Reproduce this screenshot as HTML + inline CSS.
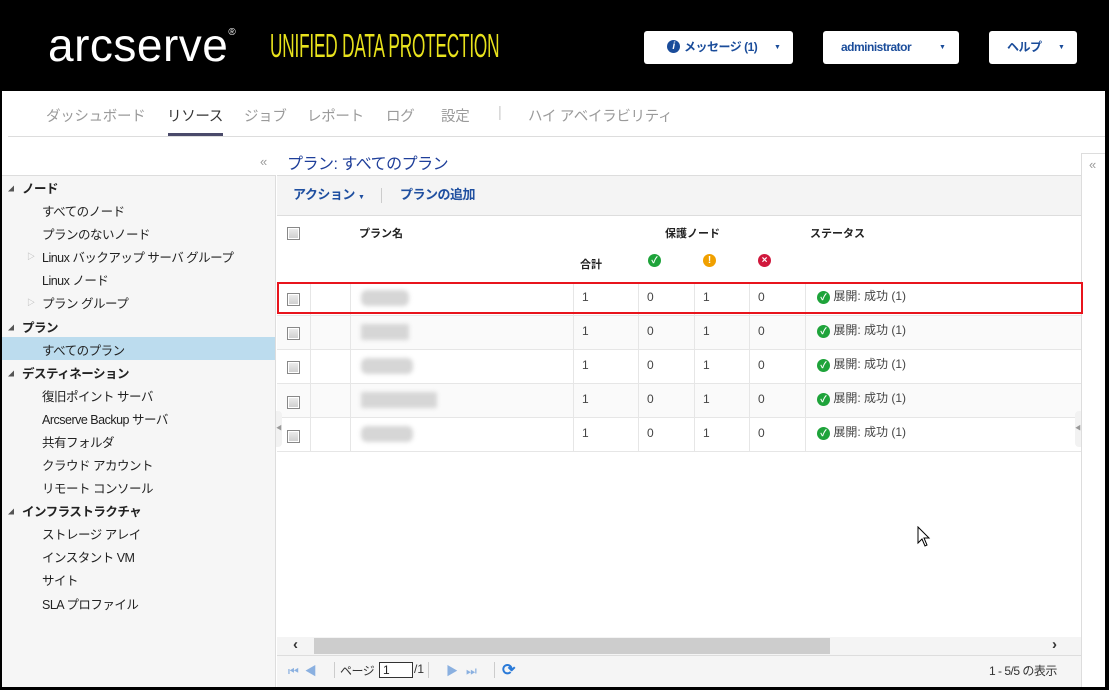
<!DOCTYPE html>
<html><head><meta charset="utf-8"><style>
*{box-sizing:border-box;margin:0;padding:0}
body{width:1109px;height:690px;background:#000;position:relative;overflow:hidden;font-family:"Liberation Sans","Noto Sans CJK JP",sans-serif;font-size:12px;color:#222}
.a{position:absolute}
.btn{position:absolute;top:31px;height:33px;background:#fff;border-radius:3px;color:#1a4c9a;font-size:12px;font-weight:bold;line-height:33px;letter-spacing:-0.5px}
.btn .c{position:absolute;font-size:7px;color:#1a4c9a}
.nav span{position:absolute;top:105px;font-size:14.5px;color:#9a9a9a;letter-spacing:-0.3px}
.side div{position:absolute;font-size:12.5px;color:#222;letter-spacing:-0.5px;white-space:nowrap}
.side .h{font-weight:bold;left:22px}
.side .i{left:42px}
.side .tri{font-size:6px;color:#555}
.cb{position:absolute;width:13px;height:13px;border:1px solid #888;background:linear-gradient(#eee,#ccc);box-shadow:inset 0 0 0 1px #fff}
.row{position:absolute;left:277px;width:804px;height:34px;border-bottom:1px solid #e6e6e6}
.row div{position:absolute;top:0;height:34px;border-left:1px solid #e6e6e6;line-height:30px;padding-left:8px;color:#444;font-size:12px}
.ok{display:inline-block;width:13px;height:13px;border-radius:50%;background:#1ea33a;color:#fff;font-size:9px;line-height:13px;text-align:center;font-weight:bold;vertical-align:0}
.blur{position:absolute;top:8px;height:16px;background:#d6d6d6;border-radius:6px;filter:blur(2px)}
</style></head><body>
<!-- header -->
<div class="a" style="left:48px;top:18px;color:#fff;font-size:46px;letter-spacing:0.5px;font-weight:normal">arcserve<sup style="font-size:10px;vertical-align:26px">®</sup></div>
<div class="a" style="left:270px;top:27px;color:#e8e21c;font-size:33px;font-weight:normal;transform:scaleX(0.52);transform-origin:0 0;white-space:nowrap;letter-spacing:-0.3px">UNIFIED DATA PROTECTION</div>
<div class="btn" style="left:644px;width:149px"><span style="position:absolute;left:23px;top:9px;width:13px;height:13px;border-radius:50%;background:#1a4c9a;color:#fff;font-size:10px;line-height:13px;text-align:center;font-style:italic">i</span><span style="position:absolute;left:40px">メッセージ (1)</span><span class="c" style="left:130px">▼</span></div>
<div class="btn" style="left:823px;width:136px"><span style="position:absolute;left:18px">administrator</span><span class="c" style="left:116px">▼</span></div>
<div class="btn" style="left:989px;width:88px"><span style="position:absolute;left:18px">ヘルプ</span><span class="c" style="left:69px">▼</span></div>
<!-- white body -->
<div class="a" style="left:2px;top:91px;width:1103px;height:596px;background:#fff"></div>
<div class="nav">
<span style="left:46px">ダッシュボード</span>
<span style="left:167px;color:#333">リソース</span>
<span style="left:244px">ジョブ</span>
<span style="left:307px">レポート</span>
<span style="left:386px">ログ</span>
<span style="left:441px">設定</span>
<span style="left:498px;color:#ccc">|</span>
<span style="left:528px">ハイ アベイラビリティ</span>
</div>
<div class="a" style="left:168px;top:133px;width:55px;height:3px;background:#4a4a6a"></div>
<div class="a" style="left:8px;top:136px;width:1097px;height:1px;background:#ddd"></div>
<div class="a" style="left:260px;top:154px;color:#999;font-size:13px">«</div>
<div class="a" style="left:287px;top:150px;color:#1f3f9a;font-size:16px;letter-spacing:-0.5px">プラン: すべてのプラン</div>
<!-- sidebar -->
<div class="a" style="left:2px;top:175px;width:274px;height:512px;background:#f6f6f6;border-top:1px solid #ddd;border-right:1px solid #ddd"></div>
<div class="a" style="left:2px;top:337px;width:273px;height:23px;background:#bcdcee"></div>
<div class="side">
<div class="tri" style="left:8px;top:184px">◢</div><div class="h" style="top:178px">ノード</div>
<div class="i" style="top:201px">すべてのノード</div>
<div class="i" style="top:224px">プランのないノード</div>
<div class="tri" style="left:27px;top:251px;color:#aaa;font-size:8px">▷</div><div class="i" style="top:247px">Linux バックアップ サーバ グループ</div>
<div class="i" style="top:270px">Linux ノード</div>
<div class="tri" style="left:27px;top:297px;color:#aaa;font-size:8px">▷</div><div class="i" style="top:293px">プラン グループ</div>
<div class="tri" style="left:8px;top:323px">◢</div><div class="h" style="top:317px">プラン</div>
<div class="i" style="top:340px">すべてのプラン</div>
<div class="tri" style="left:8px;top:369px">◢</div><div class="h" style="top:363px">デスティネーション</div>
<div class="i" style="top:386px">復旧ポイント サーバ</div>
<div class="i" style="top:409px">Arcserve Backup サーバ</div>
<div class="i" style="top:432px">共有フォルダ</div>
<div class="i" style="top:455px">クラウド アカウント</div>
<div class="i" style="top:478px">リモート コンソール</div>
<div class="tri" style="left:8px;top:507px">◢</div><div class="h" style="top:501px">インフラストラクチャ</div>
<div class="i" style="top:524px">ストレージ アレイ</div>
<div class="i" style="top:547px">インスタント VM</div>
<div class="i" style="top:570px">サイト</div>
<div class="i" style="top:594px">SLA プロファイル</div>
</div>
<!-- right collapsed panel -->
<div class="a" style="left:1081px;top:153px;width:24px;height:534px;background:#fff;border-left:1px solid #ddd;border-top:1px solid #ddd"></div>
<div class="a" style="left:1089px;top:157px;color:#999;font-size:13px">«</div>
<!-- main -->
<div class="a" style="left:277px;top:175px;width:804px;height:41px;background:#f4f4f4;border-top:1px solid #ddd;border-bottom:1px solid #ddd"></div>
<div class="a" style="left:293px;top:184px;color:#1f4fa0;font-weight:bold;font-size:13px;letter-spacing:-0.5px">アクション <span style="font-size:7px">▼</span></div>
<div class="a" style="left:381px;top:188px;width:1px;height:15px;background:#ccc"></div>
<div class="a" style="left:400px;top:184px;color:#1f4fa0;font-weight:bold;font-size:13px;letter-spacing:-0.5px">プランの追加</div>
<div class="cb" style="left:287px;top:227px"></div>
<div class="a" style="left:359px;top:225px;font-weight:bold;font-size:11px">プラン名</div>
<div class="a" style="left:665px;top:225px;font-weight:bold;font-size:11px">保護ノード</div>
<div class="a" style="left:810px;top:225px;font-weight:bold;font-size:11px">ステータス</div>
<div class="a" style="left:580px;top:256px;font-weight:bold;font-size:11px">合計</div>
<div class="a ok" style="left:648px;top:254px">✓</div>
<div class="a" style="left:703px;top:254px;width:13px;height:13px;border-radius:50%;background:#f0a000;color:#fff;font-size:10px;font-weight:bold;text-align:center;line-height:13px">!</div>
<div class="a" style="left:758px;top:254px;width:13px;height:13px;border-radius:50%;background:#d0183c;color:#fff;font-size:10px;font-weight:bold;text-align:center;line-height:13px">×</div>
<div class="a" style="left:277px;top:282px;width:804px;height:1px;background:#e6e6e6"></div>
<div class="row" style="top:282px;background:#fff"><div style="left:0;width:33px;border:0"></div><div style="left:33px;width:40px"></div><div style="left:73px;width:223px"><span class="blur" style="left:10px;width:48px"></span></div><div style="left:296px;width:65px">1</div><div style="left:361px;width:56px">0</div><div style="left:417px;width:55px">1</div><div style="left:472px;width:56px">0</div><div style="left:528px;width:276px;padding-left:11px;line-height:28px"><span class="ok">✓</span> 展開: 成功 (1)</div></div>
<div class="row" style="top:316px;background:#fafafa"><div style="left:0;width:33px;border:0"></div><div style="left:33px;width:40px"></div><div style="left:73px;width:223px"><span class="blur" style="left:10px;width:48px;border-radius:2px"></span></div><div style="left:296px;width:65px">1</div><div style="left:361px;width:56px">0</div><div style="left:417px;width:55px">1</div><div style="left:472px;width:56px">0</div><div style="left:528px;width:276px;padding-left:11px;line-height:28px"><span class="ok">✓</span> 展開: 成功 (1)</div></div>
<div class="row" style="top:350px;background:#fff"><div style="left:0;width:33px;border:0"></div><div style="left:33px;width:40px"></div><div style="left:73px;width:223px"><span class="blur" style="left:10px;width:52px"></span></div><div style="left:296px;width:65px">1</div><div style="left:361px;width:56px">0</div><div style="left:417px;width:55px">1</div><div style="left:472px;width:56px">0</div><div style="left:528px;width:276px;padding-left:11px;line-height:28px"><span class="ok">✓</span> 展開: 成功 (1)</div></div>
<div class="row" style="top:384px;background:#fafafa"><div style="left:0;width:33px;border:0"></div><div style="left:33px;width:40px"></div><div style="left:73px;width:223px"><span class="blur" style="left:10px;width:76px;border-radius:2px"></span></div><div style="left:296px;width:65px">1</div><div style="left:361px;width:56px">0</div><div style="left:417px;width:55px">1</div><div style="left:472px;width:56px">0</div><div style="left:528px;width:276px;padding-left:11px;line-height:28px"><span class="ok">✓</span> 展開: 成功 (1)</div></div>
<div class="row" style="top:418px;background:#fff"><div style="left:0;width:33px;border:0"></div><div style="left:33px;width:40px"></div><div style="left:73px;width:223px"><span class="blur" style="left:10px;width:52px"></span></div><div style="left:296px;width:65px">1</div><div style="left:361px;width:56px">0</div><div style="left:417px;width:55px">1</div><div style="left:472px;width:56px">0</div><div style="left:528px;width:276px;padding-left:11px;line-height:28px"><span class="ok">✓</span> 展開: 成功 (1)</div></div>
<div class="cb" style="left:287px;top:293px"></div>
<div class="cb" style="left:287px;top:327px"></div>
<div class="cb" style="left:287px;top:361px"></div>
<div class="cb" style="left:287px;top:396px"></div>
<div class="cb" style="left:287px;top:430px"></div>
<div class="a" style="left:277px;top:282px;width:806px;height:32px;border:2px solid #e8141c"></div>
<div class="a" style="left:276px;top:411px;width:6px;height:36px;background:#f2f2f2;border-radius:0 4px 4px 0;color:#999;font-size:6px;line-height:36px">◀</div>
<div class="a" style="left:1075px;top:411px;width:6px;height:36px;background:#f2f2f2;border-radius:4px 0 0 4px;color:#999;font-size:6px;line-height:36px">◀</div>
<!-- scrollbar -->
<div class="a" style="left:277px;top:637px;width:804px;height:18px;background:#f4f4f4"></div>
<div class="a" style="left:314px;top:638px;width:516px;height:16px;background:#cdcdcd"></div>
<div class="a" style="left:293px;top:636px;font-size:15px;color:#333;font-weight:bold">‹</div>
<div class="a" style="left:1052px;top:636px;font-size:15px;color:#333;font-weight:bold">›</div>
<!-- pager -->
<div class="a" style="left:277px;top:655px;width:804px;height:32px;background:#f5f5f5;border-top:1px solid #ddd"></div>
<div class="a" style="left:288px;top:662px;color:#8ab0e0;font-size:12px;letter-spacing:6px">⏮◀</div>
<div class="a" style="left:334px;top:662px;width:1px;height:16px;background:#ccc"></div>
<div class="a" style="left:340px;top:662px;font-size:12px;color:#333;letter-spacing:-0.5px">ページ</div>
<div class="a" style="left:379px;top:662px;width:34px;height:16px;border:1px solid #333;background:#fff;font-size:12px;line-height:14px;padding-left:3px">1</div>
<div class="a" style="left:414px;top:662px;font-size:12px;color:#333">/1</div>
<div class="a" style="left:428px;top:662px;width:1px;height:16px;background:#ccc"></div>
<div class="a" style="left:446px;top:662px;color:#8ab0e0;font-size:12px;letter-spacing:8px">▶⏭</div>
<div class="a" style="left:494px;top:662px;width:1px;height:16px;background:#ccc"></div>
<div class="a" style="left:502px;top:660px;color:#2a7ad8;font-size:16px;font-weight:bold">⟳</div>
<div class="a" style="left:989px;top:662px;font-size:12px;color:#333;letter-spacing:-0.5px">1 - 5/5 の表示</div>
<svg class="a" style="left:917px;top:526px" width="14" height="22" viewBox="0 0 14 22"><path d="M1 1 L1 17 L5 13 L8 20 L10 19 L7 12 L12 12 Z" fill="#fff" stroke="#000" stroke-width="1"/></svg>
</body></html>
